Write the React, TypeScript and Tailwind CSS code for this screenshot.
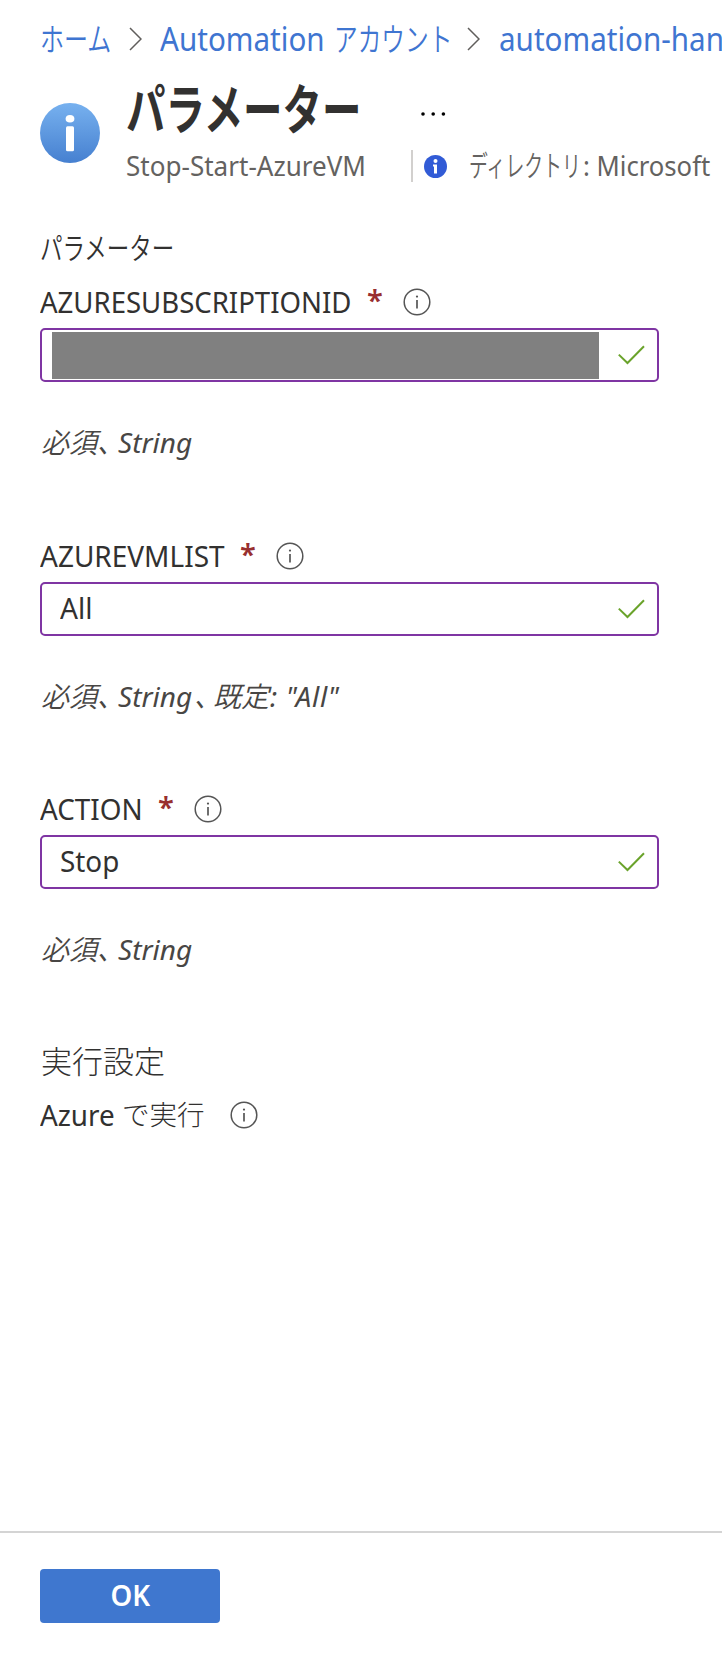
import type { ReactNode } from "react";

function InfoOutline() {
  return (
    <svg className="size-7 shrink-0" viewBox="0 0 28 28" fill="none">
      <circle cx="14" cy="14" r="12.8" stroke="#555" strokeWidth="1.5" />
      <path d="M14 12v8.5" stroke="#555" strokeWidth="1.7" />
      <circle cx="14" cy="8.6" r="1.1" fill="#555" />
    </svg>
  );
}

function Chevron() {
  return (
    <svg className="h-[24px] w-[13px] shrink-0" viewBox="0 0 13 24" fill="none">
      <path d="M1 1l11 11L1 23" stroke="#605e5c" strokeWidth="1.5" />
    </svg>
  );
}

function Check() {
  return (
    <svg className="h-[20px] w-[27px] shrink-0" viewBox="0 0 27 20" fill="none">
      <path d="M.8 9.6L9.5 18 26 1.2" stroke="#6aa32b" strokeWidth="2" />
    </svg>
  );
}

type FieldProps = {
  label: ReactNode;
  value: ReactNode;
  hint: ReactNode;
  className: string;
};

function Field({ label, value, hint, className }: FieldProps) {
  return (
    <div className={className}>
      <div className="flex h-[39px] items-center text-[29px] leading-[38px] text-[#323130]">{label}</div>
      <div className="mt-[7px] flex h-[54px] w-[619px] items-center justify-between rounded-[5px] border-2 border-[#7f35a3] pr-[12px] text-[29px] text-[#323130]">
        {value}
        <Check />
      </div>
      <div className="mt-[38px] flex h-[44px] items-center pl-px text-[28px] leading-[44px] whitespace-pre text-[#484644] italic">
        {hint}
      </div>
    </div>
  );
}

function Star() {
  return <span className="mb-[4px] w-[36px] text-[29px] font-semibold text-[#982f2f]">*</span>;
}

function Required() {
  return (
    <>
      <span className="w-[77px] font-[350] [font-feature-settings:'palt']">必須、</span>
      <span className="w-[76px]">String</span>
    </>
  );
}

export default function App() {
  return (
    <div className="flex h-[1654px] w-[722px] flex-col overflow-hidden bg-white font-['Noto_Sans','Noto_Sans_CJK_JP',sans-serif]">
      <nav className="mt-[19px] flex h-[40px] items-center pl-[40px] text-[32px] leading-[40px] whitespace-nowrap text-[#3f75d1]">
        <span className="w-[89px] shrink-0">
          <span className="inline-block origin-left scale-x-[.75] font-[350]">ホーム</span>
        </span>
        <Chevron />
        <span className="ml-[18px] w-[174px] shrink-0">
          <span className="inline-block origin-left scale-x-[.925]">Automation</span>
        </span>
        <span className="w-[133px] shrink-0">
          <span className="inline-block origin-left scale-x-[.74] font-[350]">アカウント</span>
        </span>
        <Chevron />
        <span className="ml-[19px] inline-block w-[240px] shrink-0 origin-left scale-x-[.925]">automation-han</span>
      </nav>
      <header className="flex h-[141px] items-start pl-[40px]">
        <svg className="mt-[44px] size-[60px] shrink-0" viewBox="0 0 60 60">
          <defs>
            <linearGradient id="badge" x1="0" y1="0" x2="0" y2="1">
              <stop offset="0" stopColor="#77b1ef" />
              <stop offset="1" stopColor="#4680d0" />
            </linearGradient>
          </defs>
          <circle cx="30" cy="30" r="30" fill="url(#badge)" />
          <ellipse cx="30" cy="15.7" rx="4.4" ry="3.8" fill="#fff" />
          <rect x="26" y="23.2" width="8" height="25" rx="1.5" fill="#fff" />
        </svg>
        <div className="ml-[26px] w-[596px] shrink-0">
          <div className="flex h-[84px] items-center">
            <h1 className="mt-[16px] w-[295px] shrink-0 text-[54px] leading-[84px] font-bold whitespace-nowrap text-[#323130]">
              <span className="inline-block origin-left scale-x-[.73]">パラメーター</span>
            </h1>
            <svg className="mt-[25px] h-[4px] w-[25px]" viewBox="0 0 25 4">
              <circle cx="2" cy="2" r="1.8" />
              <circle cx="12.2" cy="2" r="1.8" />
              <circle cx="22.4" cy="2" r="1.8" />
            </svg>
          </div>
          <div className="mt-[3px] flex h-[40px] items-center text-[27px] leading-[40px] whitespace-nowrap text-[#646260]">
            <span className="w-[285px] shrink-0">
              <span className="inline-block origin-left scale-x-[.965]">Stop-Start-AzureVM</span>
            </span>
            <span className="h-[32px] w-[2px] shrink-0 bg-[#d2d0ce]" />
            <svg className="ml-[11px] size-[23px] shrink-0" viewBox="0 0 23 23">
              <circle cx="11.5" cy="11.5" r="11.5" fill="#315bd6" />
              <circle cx="11.5" cy="6" r="2" fill="#fff" />
              <path d="M9 9.4h4v9.2h-3v-7H9z" fill="#fff" />
            </svg>
            <span className="ml-[22px] w-[114px] shrink-0">
              <span className="inline-block origin-left scale-x-[.65] text-[29px] font-[350]">ディレクトリ</span>
            </span>
            <span className="inline-block origin-left scale-x-[.95]">: Microsoft</span>
          </div>
        </div>
      </header>
      <main className="flex flex-1 flex-col pl-[40px] whitespace-nowrap">
        <h2 className="mt-[28px] h-[40px] text-[30px] leading-[40px] text-[#323130]">
          <span className="inline-block origin-left scale-x-[.75] font-[350]">パラメーター</span>
        </h2>
        <Field
          className="mt-[14px] h-[254px]"
          label={
            <>
              <span className="w-[327px]">
                <span className="inline-block origin-left scale-x-[.95]">AZURESUBSCRIPTIONID</span>
              </span>
              <Star />
              <InfoOutline />
            </>
          }
          value={<span className="ml-[10px] h-[47px] w-[547px] bg-[#808080]" />}
          hint={<Required />}
        />
        <Field
          className="h-[253px]"
          label={
            <>
              <span className="w-[200px]">
                <span className="inline-block origin-left scale-x-[.965]">AZUREVMLIST</span>
              </span>
              <Star />
              <InfoOutline />
            </>
          }
          value={<span className="mb-[2px] ml-[18px] inline-block origin-left scale-x-[.97]">All</span>}
          hint={
            <>
              <Required />
              <span className="w-[19px] font-[350] [font-feature-settings:'palt']">、</span>
              <span className="w-[57px] font-[350]">既定</span>
              <span className="tracking-[.7px]">: "All"</span>
            </>
          }
        />
        <Field
          className="h-[253px]"
          label={
            <>
              <span className="w-[118px]">
                <span className="inline-block origin-left scale-x-[.96]">ACTION</span>
              </span>
              <Star />
              <InfoOutline />
            </>
          }
          value={<span className="mb-[2px] ml-[18px] inline-block origin-left scale-x-[.96]">Stop</span>}
          hint={<Required />}
        />
        <h2 className="-mt-[4px] h-[46px] pl-px text-[31px] leading-[46px] font-light text-[#323130]">実行設定</h2>
        <div className="mt-[11px] flex h-[40px] items-center text-[29px] leading-[40px] text-[#323130]">
          <span className="w-[82px]">
            <span className="inline-block origin-left scale-x-[.96]">Azure</span>
          </span>
          <span className="w-[108px] text-[27.5px] font-light">で実行</span>
          <InfoOutline />
        </div>
      </main>
      <footer className="h-[123px] shrink-0 border-t-2 border-[#d4d4d4] pt-[36px] pl-[40px]">
        <button className="flex h-[54px] w-[180px] items-center justify-center rounded-[4px] bg-[#3f77cf] pb-[2px] text-[28.5px] font-semibold text-white">
          <span className="inline-block scale-x-[.97]">OK</span>
        </button>
      </footer>
    </div>
  );
}
